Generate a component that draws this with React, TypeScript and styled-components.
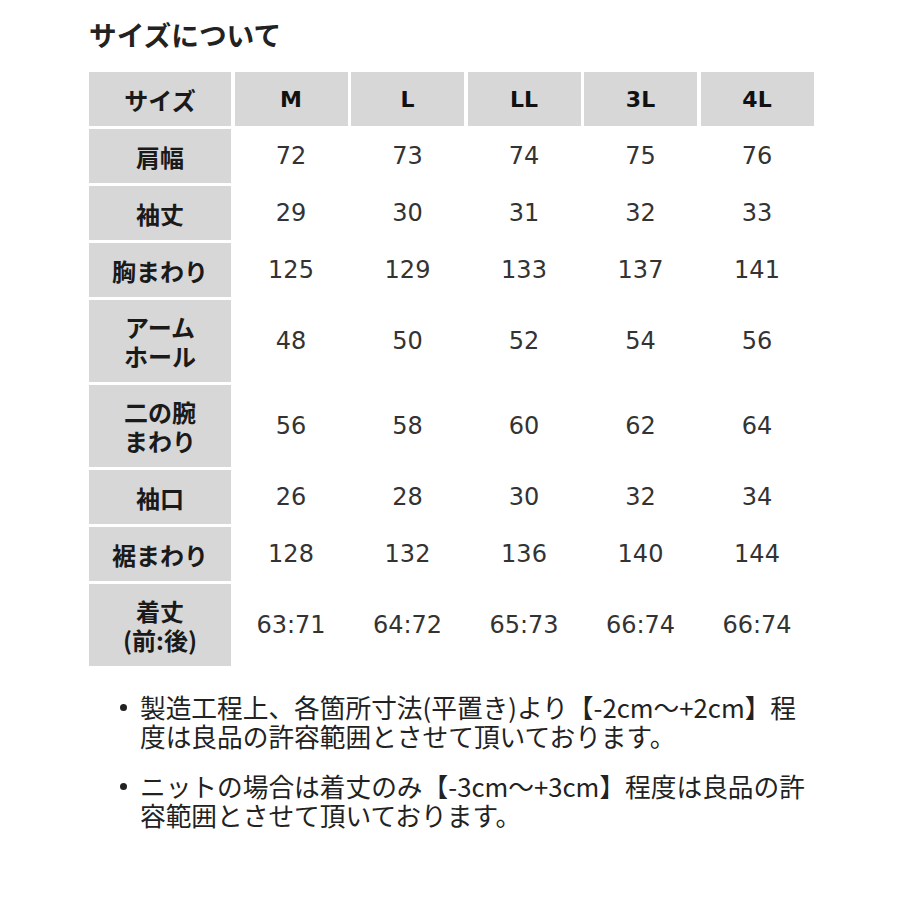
import React from "react"
import styled, { createGlobalStyle } from "styled-components"

const GlobalStyle = createGlobalStyle`
  html, body {
    margin: 0;
    padding: 0;
    background: #ffffff;
  }
  body {
    font-family: "Noto Sans CJK JP", "DejaVu Sans", sans-serif;
    color: #222;
  }
`

const PageSt = styled.div`
  width: 900px;
  height: 900px;
  padding: 18px 0 0 89px;
  box-sizing: border-box;
`

const TitleSt = styled.h2`
  margin: 0 0 22px 0;
  font-size: 27.7px;
  line-height: 32px;
  font-weight: 700;
  color: #222;
`

const TableSt = styled.div`
  display: grid;
  grid-template-columns: 142px repeat(5, 113px);
  column-gap: 3.5px;
  row-gap: 3px;
`

const CellSt = styled.div<{ $head?: boolean; $tall?: boolean }>`
  height: ${p => (p.$tall ? 82 : 54)}px;
  display: flex;
  flex-direction: column;
  align-items: center;
  justify-content: center;
  text-align: center;
  background: ${p => (p.$head ? "#d7d7d7" : "#ffffff")};
`

const LabelSt = styled.span`
  display: block;
  font-family: "Noto Sans CJK JP", sans-serif;
  font-size: 24px;
  line-height: 29px;
  height: 29px;
  font-weight: 700;
  color: #1a1a1a;
`

const SizeSt = styled.span`
  font-family: "DejaVu Sans", sans-serif;
  font-size: 22px;
  font-weight: 700;
  color: #111;
`

const ValueSt = styled.span`
  font-family: "DejaVu Sans", sans-serif;
  font-size: 24px;
  font-weight: 400;
  color: #333;
`

const NotesSt = styled.div`
  margin-top: 26px;
  padding-left: 30px;
  display: flex;
  flex-direction: column;
  gap: 21px;
`

const NoteSt = styled.div`
  display: flex;
  font-size: 25.7px;
  color: #222;
`

const BulletSt = styled.span`
  width: 21px;
  height: 29px;
  flex-shrink: 0;
  display: flex;
  align-items: center;
  padding-left: 1px;
  box-sizing: border-box;

  &::before {
    content: "";
    width: 7px;
    height: 7px;
    border-radius: 50%;
    background: #222;
    margin-top: 2px;
  }
`

const NoteLineSt = styled.span`
  display: block;
  height: 29px;
  line-height: 29px;
  white-space: nowrap;
`

const sizes = ["M", "L", "LL", "3L", "4L"]

const rows: { label: string[]; values: string[]; tall?: boolean }[] = [
  { label: ["肩幅"], values: ["72", "73", "74", "75", "76"] },
  { label: ["袖丈"], values: ["29", "30", "31", "32", "33"] },
  { label: ["胸まわり"], values: ["125", "129", "133", "137", "141"] },
  { label: ["アーム", "ホール"], values: ["48", "50", "52", "54", "56"], tall: true },
  { label: ["二の腕", "まわり"], values: ["56", "58", "60", "62", "64"], tall: true },
  { label: ["袖口"], values: ["26", "28", "30", "32", "34"] },
  { label: ["裾まわり"], values: ["128", "132", "136", "140", "144"] },
  { label: ["着丈", "(前:後)"], values: ["63:71", "64:72", "65:73", "66:74", "66:74"], tall: true },
]

const notes = [
  ["製造工程上、各箇所寸法(平置き)より【-2cm～+2cm】程", "度は良品の許容範囲とさせて頂いております。"],
  ["ニットの場合は着丈のみ【-3cm～+3cm】程度は良品の許", "容範囲とさせて頂いております。"],
]

export default function App() {
  return <PageSt>
    <GlobalStyle />
    <TitleSt>サイズについて</TitleSt>
    <TableSt>
      <CellSt $head><LabelSt>サイズ</LabelSt></CellSt>
      {sizes.map(s => <CellSt $head key={s}><SizeSt>{s}</SizeSt></CellSt>)}
      {rows.map((r, rIdx) => <React.Fragment key={rIdx}>
        <CellSt $head $tall={r.tall}>
          {r.label.map((l, i) => <LabelSt key={i}>{l}</LabelSt>)}
        </CellSt>
        {r.values.map((v, vIdx) => <CellSt $tall={r.tall} key={vIdx}><ValueSt>{v}</ValueSt></CellSt>)}
      </React.Fragment>)}
    </TableSt>
    <NotesSt>
      {notes.map((n, nIdx) => <NoteSt key={nIdx}>
        <BulletSt />
        <div>{n.map((line, i) => <NoteLineSt key={i}>{line}</NoteLineSt>)}</div>
      </NoteSt>)}
    </NotesSt>
  </PageSt>
}
